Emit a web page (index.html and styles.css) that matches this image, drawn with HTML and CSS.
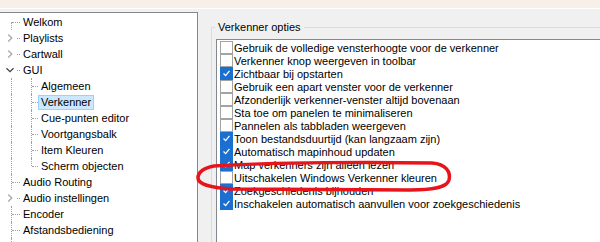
FILE: index.html
```html
<!DOCTYPE html>
<html lang="nl">
<head>
  <meta charset="UTF-8">
  <title>Verkenner opties</title>
  <link rel="stylesheet" href="styles.css">
</head>
<body>
  <div class="topbar"></div>

  <div class="main">
    <!-- Boom met instellingen-pagina's -->
    <div class="tree">
      <div class="row"><span class="gut vb h"></span><span class="lbl">Welkom</span></div>
      <div class="row"><span class="gut v h"><svg class="chev" viewBox="0 0 16 16"><polyline points="6,4 10,8 6,12"/></svg></span><span class="lbl">Playlists</span></div>
      <div class="row"><span class="gut v h"><svg class="chev" viewBox="0 0 16 16"><polyline points="6,4 10,8 6,12"/></svg></span><span class="lbl">Cartwall</span></div>
      <div class="row"><span class="gut v h"><svg class="chev open" viewBox="0 0 16 16"><polyline points="4,6 8,10 12,6"/></svg></span><span class="lbl">GUI</span></div>
      <div class="row"><span class="gut v"></span><span class="gut sub v h"></span><span class="lbl">Algemeen</span></div>
      <div class="row"><span class="gut v"></span><span class="gut sub v h"></span><span class="lbl sel">Verkenner</span></div>
      <div class="row"><span class="gut v"></span><span class="gut sub v h"></span><span class="lbl">Cue-punten editor</span></div>
      <div class="row"><span class="gut v"></span><span class="gut sub v h"></span><span class="lbl">Voortgangsbalk</span></div>
      <div class="row"><span class="gut v"></span><span class="gut sub v h"></span><span class="lbl">Item Kleuren</span></div>
      <div class="row"><span class="gut v"></span><span class="gut sub vt h"></span><span class="lbl">Scherm objecten</span></div>
      <div class="row"><span class="gut v h"></span><span class="lbl">Audio Routing</span></div>
      <div class="row"><span class="gut v h"><svg class="chev" viewBox="0 0 16 16"><polyline points="6,4 10,8 6,12"/></svg></span><span class="lbl">Audio instellingen</span></div>
      <div class="row"><span class="gut v h"></span><span class="lbl">Encoder</span></div>
      <div class="row"><span class="gut v h"></span><span class="lbl">Afstandsbediening</span></div>
      <div class="row"><span class="gut v h"></span></div>
    </div>

    <fieldset class="group">
      <legend>Verkenner opties</legend>
      <div class="checklist">
        <label class="opt"><span class="cb"></span>Gebruik de volledige vensterhoogte voor de verkenner</label>
        <label class="opt"><span class="cb"></span>Verkenner knop weergeven in toolbar</label>
        <label class="opt"><span class="cb on"><svg viewBox="0 0 13 13"><polyline points="3,6.5 5.5,9 10,3.5"/></svg></span>Zichtbaar bij opstarten</label>
        <label class="opt"><span class="cb"></span>Gebruik een apart venster voor de verkenner</label>
        <label class="opt"><span class="cb"></span>Afzonderlijk verkenner-venster altijd bovenaan</label>
        <label class="opt"><span class="cb"></span>Sta toe om panelen te minimaliseren</label>
        <label class="opt"><span class="cb"></span>Pannelen als tabbladen weergeven</label>
        <label class="opt"><span class="cb on"><svg viewBox="0 0 13 13"><polyline points="3,6.5 5.5,9 10,3.5"/></svg></span>Toon bestandsduurtijd (kan langzaam zijn)</label>
        <label class="opt"><span class="cb on"><svg viewBox="0 0 13 13"><polyline points="3,6.5 5.5,9 10,3.5"/></svg></span>Automatisch mapinhoud updaten</label>
        <label class="opt"><span class="cb on"><svg viewBox="0 0 13 13"><polyline points="3,6.5 5.5,9 10,3.5"/></svg></span>Map verkenners zijn alleen lezen</label>
        <label class="opt"><span class="cb"></span>Uitschakelen Windows Verkenner kleuren</label>
        <label class="opt"><span class="cb on"><svg viewBox="0 0 13 13"><polyline points="3,6.5 5.5,9 10,3.5"/></svg></span>Zoekgeschiedenis bijhouden</label>
        <label class="opt"><span class="cb on"><svg viewBox="0 0 13 13"><polyline points="3,6.5 5.5,9 10,3.5"/></svg></span>Inschakelen automatisch aanvullen voor zoekgeschiedenis</label>
      </div>
    </fieldset>
  </div>

  <!-- Rode markering, met de hand getekend -->
  <svg class="mark" viewBox="0 0 600 242">
    <path d="M214,166 C270,162 380,162 432,163 C446,164 451,172 449,180 C447,187 436,190 410,190 L232,189 C212,188 198,184 198,178 C198,172 204,168 214,166"/>
  </svg>
</body>
</html>
```

FILE: styles.css
```css
body {
  margin: 0;
  width: 600px;
  height: 242px;
  overflow: hidden;
  position: relative;
  background-color: #f0f0f0;
  font-family: "Liberation Sans", Arial, sans-serif;
  font-size: 11px;
  color: #000;
}

.topbar {
  height: 8px;
  background-color: #f8efe9;
  border-bottom: 1px solid #ffffff;
}

.main {
  display: flex;
  height: 233px;
}

/* Tree view */
.tree {
  flex: none;
  width: 197px;
  margin-top: 3px;
  padding-top: 1px;
  background-color: #fff;
  border-top: 1px solid #828790;
  border-right: 1px solid #828790;
}

.row {
  display: flex;
  align-items: center;
  height: 16px;
}

.gut {
  flex: none;
  position: relative;
  width: 20px;
  align-self: stretch;
}

.gut.sub {
  width: 18px;
}

.gut::before,
.gut::after {
  content: "";
  position: absolute;
}

.gut.v::before {
  left: 11px;
  top: 0;
  bottom: 0;
  border-left: 1px dotted #a0a0a0;
}

.gut.vt::before {
  left: 11px;
  top: 0;
  height: 8px;
  border-left: 1px dotted #a0a0a0;
}

.gut.vb::before {
  left: 11px;
  top: 8px;
  bottom: 0;
  border-left: 1px dotted #a0a0a0;
}

.gut.h::after {
  left: 12px;
  top: 8px;
  width: 8px;
  border-top: 1px dotted #a0a0a0;
}

.gut.sub.h::after {
  width: 6px;
}

.chev {
  position: absolute;
  left: 3px;
  top: 0;
  width: 14px;
  height: 16px;
  background-color: #fff;
  z-index: 1;
  fill: none;
  stroke: #a6a6a6;
  stroke-width: 1.4;
}

.chev.open {
  stroke: #404040;
}

.lbl {
  padding: 0 2px;
  border: 1px solid transparent;
  line-height: 13px;
  white-space: nowrap;
}

.lbl.sel {
  background-color: #cce8ff;
  border-color: #99d1ff;
}

/* Group box */
.group {
  flex: 1;
  margin: 12px -40px 0 13px;
  padding: 5px 0 0 4px;
  border: 1px solid #dcdcdc;
  border-right: none;
  border-bottom: none;
  min-width: 0;
}

.group legend {
  padding: 0 3px;
  margin-left: -1px;
  line-height: 13px;
}

.checklist {
  height: 300px;
  padding: 1px 0 0 3px;
  background-color: #fff;
  border-top: 1px solid #828790;
  border-left: 1px solid #828790;
}

.opt {
  display: flex;
  align-items: center;
  gap: 1px;
  height: 13px;
  white-space: nowrap;
}

.cb {
  flex: none;
  box-sizing: border-box;
  width: 13px;
  height: 13px;
  border: 1px solid #a3a3a3;
  background-color: #fff;
}

.cb.on {
  background-color: #1a6fd1;
  border-color: #1a6fd1;
}

.cb svg {
  display: block;
  width: 11px;
  height: 11px;
  fill: none;
  stroke: #fff;
  stroke-width: 1.5;
}

/* Red marker ellipse */
.mark {
  position: absolute;
  left: 0;
  top: 0;
  width: 600px;
  height: 242px;
  pointer-events: none;
  fill: none;
  stroke: #e8141c;
  stroke-width: 3.5;
  stroke-linecap: round;
}
```
